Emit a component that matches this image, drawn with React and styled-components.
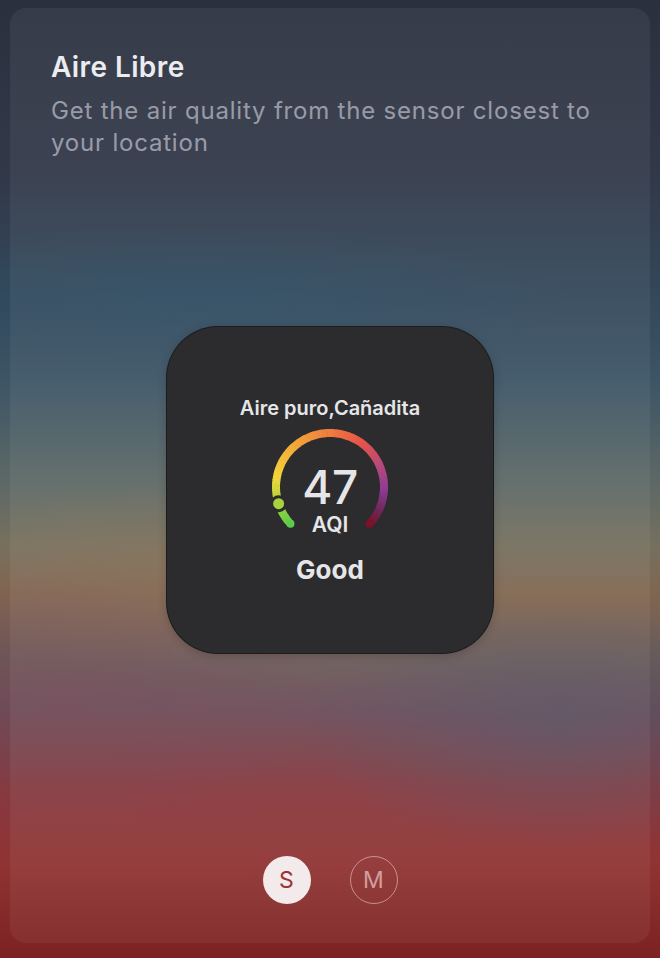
import React from 'react';
import styled, { createGlobalStyle } from 'styled-components';

const GlobalStyle = createGlobalStyle`
  html, body {
    margin: 0;
    padding: 0;
    height: 100%;
  }
  body {
    font-family: Inter, "Noto Sans", "Liberation Sans", sans-serif;
    background-color: #2b303e;
    background-image:
      radial-gradient(ellipse 55% 18% at 85% 76%, rgba(80, 84, 104, 0.55), transparent 70%),
      radial-gradient(ellipse 60% 20% at 10% 72%, rgba(120, 70, 85, 0.45), transparent 70%),
      radial-gradient(ellipse 50% 14% at 25% 60%, rgba(140, 110, 80, 0.45), transparent 70%),
      radial-gradient(ellipse 75% 10% at 30% 31%, rgba(40, 80, 105, 0.45), transparent 75%),
      linear-gradient(180deg,
        #2b303e 0%,
        #313848 18%,
        #33485b 31%,
        #3d5566 40%,
        #5c6866 50%,
        #75705e 57%,
        #806650 62%,
        #6a5a58 69%,
        #6a4c58 74%,
        #86393f 82%,
        #903333 90%,
        #7c2222 100%);
  }
  #root {
    min-height: 100vh;
  }
`;

const Page = styled.div`
  min-height: 958px;
  box-sizing: border-box;
  padding: 8px 10px 15px;
  display: flex;
`;

const Panel = styled.div`
  flex: 1;
  border-radius: 16px;
  background: rgba(255, 255, 255, 0.055);
  padding: 44px 41px 39px;
  display: flex;
  flex-direction: column;
`;

const Title = styled.h1`
  margin: 0;
  font-size: 28px;
  line-height: 30px;
  font-weight: 600;
  color: #ececf0;
  letter-spacing: 0.4px;
`;

const Subtitle = styled.p`
  margin: 13px 0 0;
  font-size: 24px;
  line-height: 32px;
  font-weight: 400;
  color: rgba(235, 235, 245, 0.55);
  letter-spacing: 0.8px;
`;

const Stage = styled.div`
  display: flex;
  justify-content: center;
  margin-top: 167px;
`;

const Widget = styled.div`
  width: 328px;
  height: 328px;
  box-sizing: border-box;
  border-radius: 52px;
  background: #2c2c2e;
  border: 1px solid rgba(0, 0, 0, 0.35);
  box-shadow: 0 2px 10px rgba(0, 0, 0, 0.18);
  display: flex;
  flex-direction: column;
  align-items: center;
  padding-top: 69px;
  color: #e6e6e8;
`;

const Station = styled.div`
  font-size: 20px;
  line-height: 24px;
  font-weight: 600;
`;

const GaugeWrap = styled.div`
  position: relative;
  width: 130px;
  height: 110px;
  margin-top: 9px;
`;

const Reading = styled.div`
  position: absolute;
  left: 0;
  right: 0;
  top: 35px;
  display: flex;
  flex-direction: column;
  align-items: center;
`;

const Value = styled.div`
  font-size: 46px;
  line-height: 46px;
  font-weight: 500;
  letter-spacing: -0.5px;
`;

const Unit = styled.div`
  margin-top: 4px;
  font-size: 21px;
  line-height: 22px;
  font-weight: 600;
`;

const Level = styled.div`
  margin-top: 16px;
  font-size: 26px;
  line-height: 30px;
  font-weight: 700;
`;

const SizeRow = styled.div`
  margin-top: auto;
  display: flex;
  justify-content: center;
  gap: 39px;
`;

const SizeButton = styled.button`
  width: 48px;
  height: 48px;
  border-radius: 50%;
  box-sizing: border-box;
  padding: 0;
  font-family: inherit;
  font-size: 23px;
  font-weight: 400;
  display: flex;
  align-items: center;
  justify-content: center;
  cursor: pointer;
  background: ${(p) => (p.$active ? '#f3ebeb' : 'transparent')};
  color: ${(p) => (p.$active ? '#9a3434' : 'rgba(255, 225, 225, 0.6)')};
  border: ${(p) => (p.$active ? 'none' : '1.5px solid rgba(255, 225, 225, 0.5)')};
`;

const stops = [
  [0, [92, 204, 74]],
  [0.1, [170, 212, 60]],
  [0.2, [244, 214, 58]],
  [0.36, [244, 164, 58]],
  [0.5, [240, 124, 62]],
  [0.63, [232, 84, 74]],
  [0.75, [184, 74, 122]],
  [0.85, [140, 60, 150]],
  [0.93, [112, 40, 90]],
  [1, [122, 18, 40]],
];

function colorAt(t) {
  for (let i = 1; i < stops.length; i++) {
    if (t <= stops[i][0]) {
      const [t0, c0] = stops[i - 1];
      const [t1, c1] = stops[i];
      const k = (t - t0) / (t1 - t0);
      const c = c0.map((v, j) => Math.round(v + (c1[j] - v) * k));
      return `rgb(${c[0]},${c[1]},${c[2]})`;
    }
  }
  const c = stops[stops.length - 1][1];
  return `rgb(${c[0]},${c[1]},${c[2]})`;
}

const CX = 65;
const CY = 58;
const R = 54;
const START = -133;
const END = 133;

function pt(deg) {
  const a = (deg * Math.PI) / 180;
  return [CX + R * Math.sin(a), CY - R * Math.cos(a)];
}

function Gauge({ value, max }) {
  const n = 90;
  const step = (END - START) / n;
  const segs = [];
  for (let i = 0; i < n; i++) {
    const a0 = START + i * step;
    const a1 = Math.min(END, a0 + step + 0.6);
    const [x0, y0] = pt(a0);
    const [x1, y1] = pt(a1);
    segs.push(
      <path
        key={i}
        d={`M${x0.toFixed(2)} ${y0.toFixed(2)} A${R} ${R} 0 0 1 ${x1.toFixed(2)} ${y1.toFixed(2)}`}
        stroke={colorAt((i + 0.5) / n)}
        strokeWidth="8"
        fill="none"
      />
    );
  }
  const [sx, sy] = pt(START);
  const [ex, ey] = pt(END);
  const da = START + (END - START) * (value / max);
  const [dx, dy] = pt(da);
  return (
    <svg width="130" height="110" viewBox="0 0 130 110">
      {segs}
      <circle cx={sx} cy={sy} r="4" fill={colorAt(0)} />
      <circle cx={ex} cy={ey} r="4" fill={colorAt(1)} />
      <circle cx={dx} cy={dy} r="8.5" fill="#2c2c2e" />
      <circle cx={dx} cy={dy} r="5.5" fill={colorAt(value / max)} />
    </svg>
  );
}

export default function App() {
  return (
    <>
      <GlobalStyle />
      <Page>
        <Panel>
          <Title>Aire Libre</Title>
          <Subtitle>Get the air quality from the sensor closest to your location</Subtitle>
          <Stage>
            <Widget>
              <Station>Aire puro,Cañadita</Station>
              <GaugeWrap>
                <Gauge value={47} max={500} />
                <Reading>
                  <Value>47</Value>
                  <Unit>AQI</Unit>
                </Reading>
              </GaugeWrap>
              <Level>Good</Level>
            </Widget>
          </Stage>
          <SizeRow>
            <SizeButton $active>S</SizeButton>
            <SizeButton>M</SizeButton>
          </SizeRow>
        </Panel>
      </Page>
    </>
  );
}
